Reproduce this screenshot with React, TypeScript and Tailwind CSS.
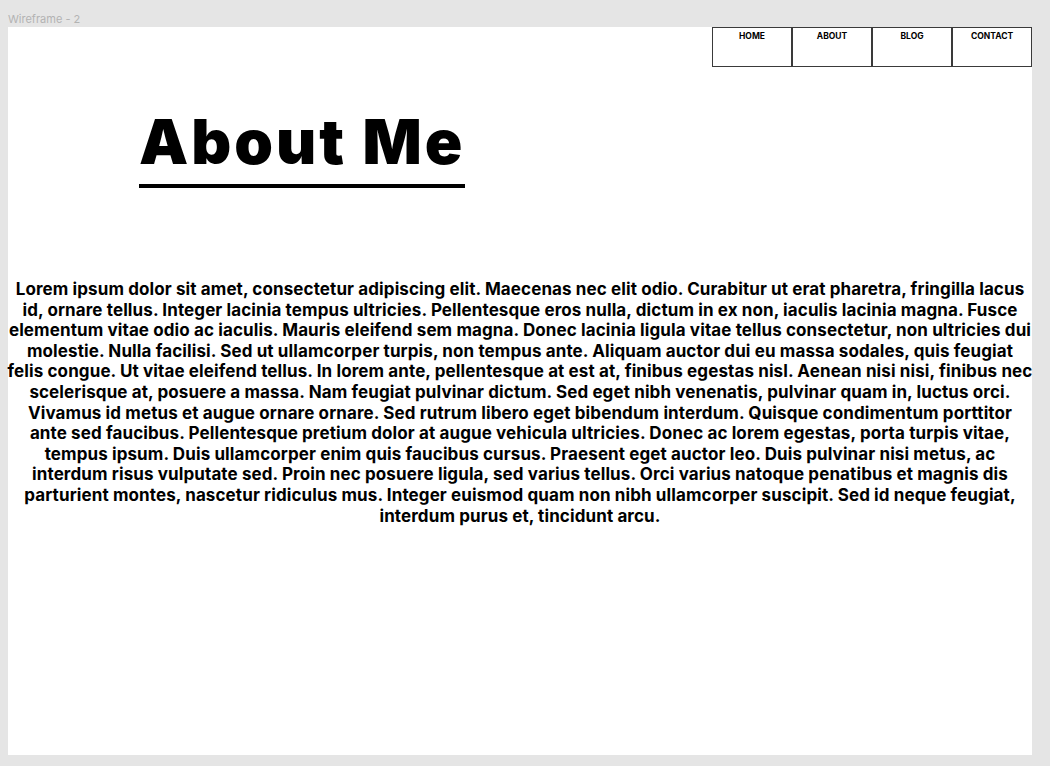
import { Fragment } from 'react'

const navItems = ['HOME', 'ABOUT', 'BLOG', 'CONTACT']

// line breaks follow the wireframe
const bioLines = [
  'Lorem ipsum dolor sit amet, consectetur adipiscing elit. Maecenas nec elit odio. Curabitur ut erat pharetra, fringilla lacus',
  'id, ornare tellus. Integer lacinia tempus ultricies. Pellentesque eros nulla, dictum in ex non, iaculis lacinia magna. Fusce',
  'elementum vitae odio ac iaculis. Mauris eleifend sem magna. Donec lacinia ligula vitae tellus consectetur, non ultricies dui',
  'molestie. Nulla facilisi. Sed ut ullamcorper turpis, non tempus ante. Aliquam auctor dui eu massa sodales, quis feugiat',
  'felis congue. Ut vitae eleifend tellus. In lorem ante, pellentesque at est at, finibus egestas nisl. Aenean nisi nisi, finibus nec',
  'scelerisque at, posuere a massa. Nam feugiat pulvinar dictum. Sed eget nibh venenatis, pulvinar quam in, luctus orci.',
  'Vivamus id metus et augue ornare ornare. Sed rutrum libero eget bibendum interdum. Quisque condimentum porttitor',
  'ante sed faucibus. Pellentesque pretium dolor at augue vehicula ultricies. Donec ac lorem egestas, porta turpis vitae,',
  'tempus ipsum. Duis ullamcorper enim quis faucibus cursus. Praesent eget auctor leo. Duis pulvinar nisi metus, ac',
  'interdum risus vulputate sed. Proin nec posuere ligula, sed varius tellus. Orci varius natoque penatibus et magnis dis',
  'parturient montes, nascetur ridiculus mus. Integer euismod quam non nibh ullamcorper suscipit. Sed id neque feugiat,',
  'interdum purus et, tincidunt arcu.',
]

export default function App() {
  return (
    <div className="h-[766px] w-[1050px] bg-[#e5e5e5] pl-[8px] font-['Inter',sans-serif]">
      {/* Frame label */}
      <div className="h-[27px] pt-[13px] text-[11px] leading-[13px] text-[#b3b3b3]">Wireframe - 2</div>

      {/* Frame */}
      <div className="h-[728px] w-[1024px] bg-white">
        {/* Nav */}
        <div className="flex justify-end">
          {navItems.map((item) => (
            <div
              key={item}
              className="h-[40px] w-[80px] border border-[#3a3a3a] pt-[2px] text-center text-[8.5px] font-bold text-black"
            >
              {item}
            </div>
          ))}
        </div>

        {/* Heading */}
        <div className="mt-[45px] pl-[131px]">
          <h1 className="inline-block border-b-4 border-black pb-[12px] text-[62px] font-black leading-[60px] tracking-[3px] text-black">
            About Me
          </h1>
        </div>

        {/* Body */}
        <p className="-mx-[3px] mt-[91px] text-center text-[17px] font-bold leading-[20.6px] tracking-[0.11px] text-black">
          {bioLines.map((line, i) => (
            <Fragment key={i}>
              {line}
              {i < bioLines.length - 1 && ' '}
              {i < bioLines.length - 1 && <br />}
            </Fragment>
          ))}
        </p>
      </div>
    </div>
  )
}
